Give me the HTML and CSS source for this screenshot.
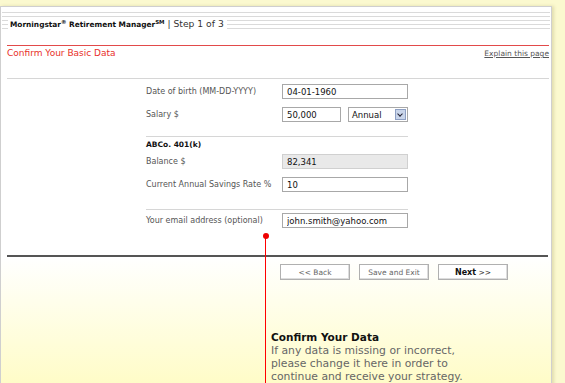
FILE: index.html
```html
<!DOCTYPE html>
<html lang="en">

<head>
    <meta charset="UTF-8" />
    <title>Morningstar Retirement Manager - Step 1 of 3</title>
    <link rel="stylesheet" href="styles.css">
</head>

<body>

    <div class="page">

        <!-- Faixa do topo -->
        <div class="brandbar">
            <span class="brand"><b>Morningstar<sup>®</sup> Retirement Manager<sup>SM</sup></b> | Step 1 of 3</span>
        </div>

        <!-- Título -->
        <div class="title-row">
            <span class="title">Confirm Your Basic Data</span>
            <a href="#" class="explain">Explain this page</a>
        </div>

        <!-- Formulário -->
        <div class="form">
            <div class="row">
                <label>Date of birth (MM-DD-YYYY)</label>
                <input class="field wide" type="text" value="04-01-1960">
            </div>
            <div class="row">
                <label>Salary $</label>
                <input class="field short" type="text" value="50,000">
                <div class="select">Annual<span class="arrow"></span></div>
            </div>

            <div class="group">
                <div class="group-title">ABCo. 401(k)</div>
                <div class="row">
                    <label>Balance $</label>
                    <input class="field wide readonly" type="text" value="82,341" readonly>
                </div>
                <div class="row">
                    <label>Current Annual Savings Rate %</label>
                    <input class="field wide" type="text" value="10">
                </div>
            </div>

            <div class="group email">
                <div class="row">
                    <label>Your email address (optional)</label>
                    <input class="field wide" type="text" value="john.smith@yahoo.com">
                </div>
            </div>
        </div>

        <!-- Botões -->
        <div class="actions">
            <button>&lt;&lt; Back</button>
            <button>Save and Exit</button>
            <button class="next"><b>Next</b> &gt;&gt;</button>
        </div>

        <!-- Nota explicativa -->
        <div class="callout">
            <span class="dot"></span>
            <div class="note">
                <b>Confirm Your Data</b>
                If any data is missing or incorrect,<br>
                please change it here in order to<br>
                continue and receive your strategy.
            </div>
        </div>

    </div>

</body>

</html>
```

FILE: styles.css
```css
body {
    margin: 0;
    background: #fbf9cf;
    font-family: "DejaVu Sans", Verdana, sans-serif;
    overflow: hidden;
}

.page {
    position: relative;
    width: 552px;
    height: 383px;
    margin-top: 6px;
    border: 1px solid #cfcfcf;
    border-bottom: none;
    background: linear-gradient(#fff 0, #fff 250px, #fffcc6 380px);
    box-shadow: 2px 0 3px rgba(150, 140, 80, 0.25);
    box-sizing: border-box;
}

/* Faixa com linhas */
.brandbar {
    margin: 5px 1px 0 1px;
    height: 17px;
    background: repeating-linear-gradient(#dadada 0, #dadada 1px, transparent 1px, transparent 4px);
}

.brand {
    display: inline-block;
    margin-left: 6px;
    padding: 0 3px 0 2px;
    background: #fff;
    height: 14px;
    line-height: 14px;
    margin-top: 1px;
    font-size: 9.2px;
    color: #333;
}

.brand b {
    font-size: 7.4px;
    color: #111;
}

.brand sup {
    font-size: 5.5px;
    vertical-align: 3px;
    line-height: 0;
}

/* Título */
.title-row {
    display: flex;
    justify-content: space-between;
    align-items: flex-start;
    margin: 16px 2px 0 6px;
    border-top: 1px solid #e24a4a;
    border-bottom: 1px solid #d6d6d6;
    height: 32px;
}

.title {
    margin-top: 2px;
    font-size: 9px;
    color: #e8302a;
}

.explain {
    margin-top: 3px;
    font-size: 7.5px;
    color: #555;
}

/* Formulário */
.form {
    margin-left: 145px;
    width: 262px;
    padding-top: 5px;
    font-size: 8px;
    color: #555;
}

.row {
    display: flex;
    align-items: center;
    height: 15px;
    margin-bottom: 8px;
}

.row label {
    width: 136px;
}

.field {
    height: 15px;
    box-sizing: border-box;
    border: 1px solid #a8a8a8;
    padding: 0 4px;
    font-family: "DejaVu Sans", Verdana, sans-serif;
    font-size: 8.5px;
    color: #111;
}

.wide {
    width: 126px;
}

.short {
    width: 59px;
}

.readonly {
    background: #e9e9e9;
    border-color: #d0d0d0;
}

.select {
    display: flex;
    justify-content: space-between;
    align-items: center;
    margin-left: 7px;
    width: 60px;
    height: 15px;
    box-sizing: border-box;
    border: 1px solid #a8a8a8;
    padding-left: 3px;
    font-size: 8.5px;
    color: #111;
}

.arrow {
    width: 11px;
    height: 11px;
    margin-right: 1px;
    background: #c9d5ea;
    border: 1px solid #8ea0c4;
    box-sizing: border-box;
    position: relative;
}

.arrow::after {
    content: "";
    position: absolute;
    left: 2px;
    top: 2px;
    width: 3px;
    height: 3px;
    border-right: 1.5px solid #223;
    border-bottom: 1.5px solid #223;
    transform: rotate(45deg);
}

.group {
    border-top: 1px solid #d6d6d6;
    margin-top: 14px;
    padding-top: 3px;
}

.group-title {
    font-weight: bold;
    font-size: 7.5px;
    line-height: 9px;
    color: #111;
    margin-bottom: 5px;
}

.email {
    margin-top: 17px;
    padding-top: 3px;
}

/* Botões */
.actions {
    display: flex;
    justify-content: flex-end;
    gap: 9px;
    margin: 27px 3px 0 6px;
    padding: 7px 40px 0 0;
    border-top: 2px solid #555;
}

.actions button {
    width: 70px;
    height: 16px;
    padding: 0;
    background: #fff;
    border: 1px solid #b0b0b0;
    box-shadow: inset -1px -1px 0 #ddd;
    font-family: "DejaVu Sans", Verdana, sans-serif;
    font-size: 7.5px;
    color: #666;
}

.actions .next {
    color: #333;
}

.next b {
    color: #111;
    font-size: 8px;
}

/* Nota */
.callout {
    position: absolute;
    left: 264px;
    top: 228px;
    height: 160px;
    border-left: 1px solid #f00;
}

.dot {
    position: absolute;
    left: -3.5px;
    top: -2px;
    width: 6px;
    height: 6px;
    border-radius: 50%;
    background: #e00;
}

.note {
    position: absolute;
    left: 5px;
    top: 96px;
    width: 280px;
    font-size: 10.8px;
    line-height: 13px;
    color: #666;
}

.note b {
    display: block;
    font-size: 10.5px;
    color: #111;
}
```
